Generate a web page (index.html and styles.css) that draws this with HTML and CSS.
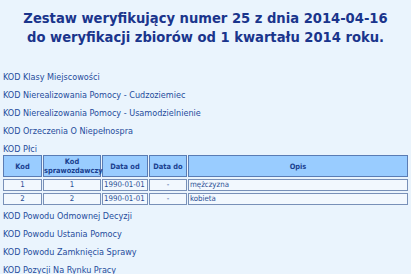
FILE: index.html
```html
<!DOCTYPE html>
<html lang="pl">
<head>
    <meta charset="UTF-8">
    <title>Zestaw weryfikujący</title>
    <link rel="stylesheet" href="styles.css">
</head>
<body>
    <h1 class="title">Zestaw weryfikujący numer 25 z dnia 2014-04-16<br>do weryfikacji zbiorów od 1 kwartału 2014 roku.</h1>
    <div class="kod">KOD Klasy Miejscowości</div>
    <div class="kod">KOD Nierealizowania Pomocy - Cudzoziemiec</div>
    <div class="kod">KOD Nierealizowania Pomocy - Usamodzielnienie</div>
    <div class="kod">KOD Orzeczenia O Niepełnospra</div>
    <div class="kod">KOD Płci</div>
    <table class="slownik">
        <tr>
            <th class="col-kod">Kod</th>
            <th class="col-spr">Kod<br>sprawozdawczy</th>
            <th class="col-od">Data od</th>
            <th class="col-do">Data do</th>
            <th>Opis</th>
        </tr>
        <tr>
            <td class="center">1</td>
            <td class="center">1</td>
            <td>1990-01-01</td>
            <td class="center">-</td>
            <td>mężczyzna</td>
        </tr>
        <tr>
            <td class="center">2</td>
            <td class="center">2</td>
            <td>1990-01-01</td>
            <td class="center">-</td>
            <td>kobieta</td>
        </tr>
    </table>
    <div class="kod">KOD Powodu Odmownej Decyzji</div>
    <div class="kod">KOD Powodu Ustania Pomocy</div>
    <div class="kod">KOD Powodu Zamknięcia Sprawy</div>
    <div class="kod">KOD Pozycji Na Rynku Pracy</div>
</body>
</html>
```

FILE: styles.css
```css
body {
    background-color: #eaf4fd;
    margin: 0;
    padding: 0 3px;
    font-family: "DejaVu Sans Condensed", "DejaVu Sans", sans-serif;
    color: #1f4c9c;
}

.title {
    font-size: 14.6px;
    line-height: 19px;
    text-align: center;
    color: #1a358c;
    margin: 8px 0 22px 0;
    white-space: nowrap;
}

.kod {
    font-size: 9px;
    line-height: 18px;
    white-space: nowrap;
}

.slownik {
    width: calc(100% + 2px);
    table-layout: fixed;
    border-spacing: 1px 2px;
    margin: -5px -1px 0 -1px;
    font-size: 7.8px;
    white-space: nowrap;
}

.slownik th {
    box-sizing: border-box;
    background-color: #99ccff;
    border: 1px solid #5a7cb4;
    font-size: 7.4px;
    line-height: 9px;
    height: 22px;
    padding: 0;
    color: #1a3f8f;
}

.slownik td {
    background-color: #f2f8fe;
    border: 1px solid #7890b8;
    line-height: 10px;
    height: 10px;
    padding: 0 1px;
    color: #2a4f94;
    overflow: hidden;
}

.slownik .center {
    text-align: center;
}

.col-kod {
    width: 39px;
}

.col-spr {
    width: 58px;
}

.col-od {
    width: 46px;
}

.col-do {
    width: 38px;
}
```
